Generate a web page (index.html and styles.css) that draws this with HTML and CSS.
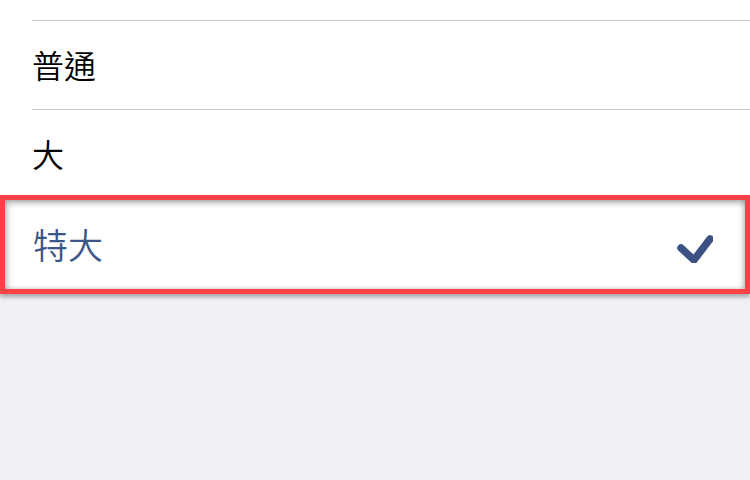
FILE: index.html
```html
<!DOCTYPE html>
<html lang="zh-Hant">
<head>
<meta charset="utf-8">
<link rel="stylesheet" href="styles.css">
</head>
<body>
<div class="list">
  <div class="top-space"></div>
  <div class="row"><div class="cell">普通</div></div>
  <div class="row"><div class="cell">大</div></div>
  <div class="selected">
    <span class="label">特大</span>
    <svg class="check" width="40" height="36" viewBox="0 0 40 36">
      <polyline points="8,21 21,33 37,12" fill="none" stroke="#3b5184" stroke-width="7.5" stroke-linecap="round" stroke-linejoin="round"/>
    </svg>
  </div>
</div>
</body>
</html>
```

FILE: styles.css
```css
html, body {
  margin: 0;
  padding: 0;
}
body {
  background: #efeff4;
  width: 750px;
  height: 480px;
  overflow: hidden;
  font-family: "Noto Sans CJK TC", "Noto Sans CJK SC", sans-serif;
  font-weight: 350;
}
.list {
  background: #ffffff;
}
.top-space {
  height: 20px;
}
.row {
  padding-left: 32px;
}
.cell {
  height: 85px;
  padding-bottom: 3px;
  border-top: 1px solid #c8c7cc;
  display: flex;
  align-items: center;
  font-size: 32px;
  color: #000;
}
.selected {
  position: relative;
  margin-top: -3px;
  height: 89px;
  border: 5px solid #fb4248;
  background: #fff;
  display: flex;
  align-items: center;
  justify-content: space-between;
  padding: 0 32px 0 28px;
  box-shadow: inset 2px 3px 6px rgba(0, 0, 0, 0.28), inset -2px 0 5px rgba(0, 0, 0, 0.2), 0 3px 4px rgba(0, 0, 0, 0.3);
}
.label {
  font-size: 35px;
  color: #3c5689;
  padding-bottom: 2px;
}
.check {
  display: block;
}
```
